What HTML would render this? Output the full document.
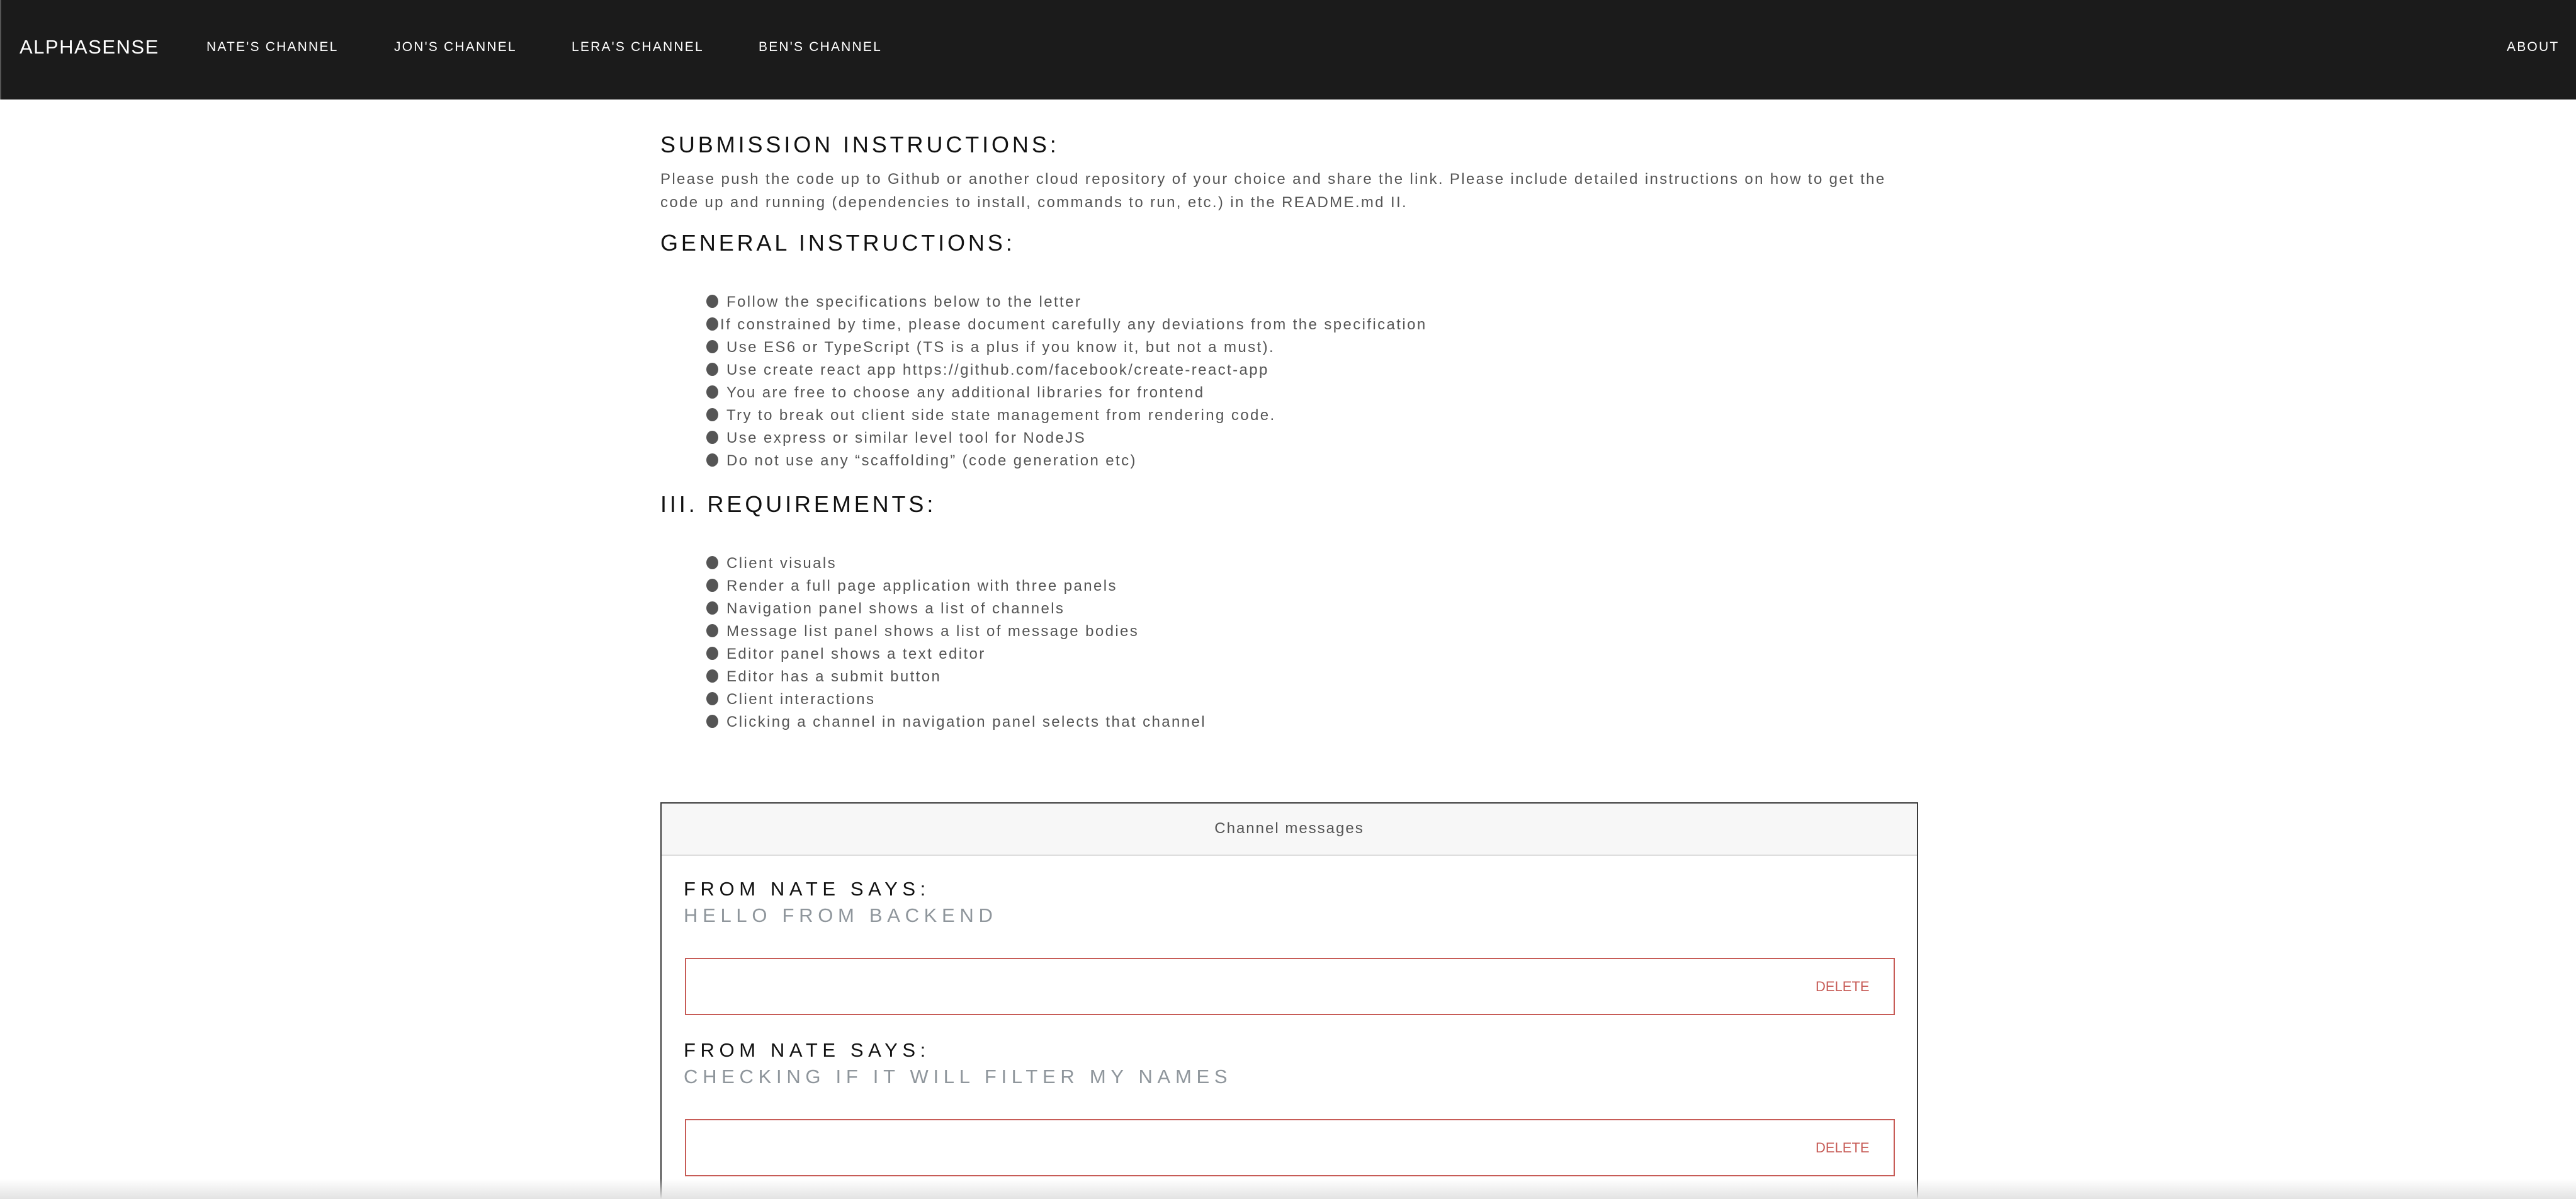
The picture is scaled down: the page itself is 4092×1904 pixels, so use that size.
<!DOCTYPE html>
<html style="overflow:hidden;height:1904px"><head><meta charset="utf-8"><style>
*{margin:0;padding:0;box-sizing:border-box}
body{width:4092px;height:1904px;overflow:hidden;background:#fff;font-family:"Liberation Sans",sans-serif;position:relative}
.hdr{position:absolute;left:0;top:0;width:4092px;height:158px;background:#1b1b1b;border-left:2px solid #555}
.hdr span{position:absolute;color:#fff;top:0;line-height:150px;white-space:nowrap}
.logo{font-size:31px;letter-spacing:1.5px;left:29px}
.nav{font-size:21px;letter-spacing:2.2px}
.a{position:absolute;white-space:nowrap}
h2{position:absolute;left:1049px;font-weight:normal;font-size:36px;letter-spacing:4.9px;color:#111;white-space:nowrap;line-height:40px}
.p{left:1049px;font-size:24px;letter-spacing:2.35px;color:#555;line-height:37px}
.li{position:absolute;left:1122px;font-size:24px;letter-spacing:2.4px;color:#555;white-space:nowrap;line-height:36px}
.li::before{content:"";display:inline-block;width:19px;height:21px;border-radius:50%;background:#555;margin-right:13px;vertical-align:-2px}
.li.t::before{margin-right:3px}
.box{position:absolute;left:1049px;top:1274px;width:1998px;height:640px;border:2px solid #3a3a3a}
.bh{height:83px;background:#f7f7f7;border-bottom:2px solid #ddd;text-align:center;line-height:80px;font-size:24px;letter-spacing:2px;color:#555}
.from{position:absolute;left:1086px;font-size:31px;letter-spacing:7.6px;color:#111;line-height:36px}
.msg{position:absolute;left:1086px;font-size:31px;letter-spacing:7.7px;color:#8f969c;line-height:36px}
.red{position:absolute;left:1088px;width:1922px;height:91px;border:2px solid #c75c57;background:#fff}
.red span{position:absolute;left:1794px;top:0;line-height:87px;font-size:22px;color:#c75c57;letter-spacing:0}
.shade{position:absolute;left:0;top:1872px;width:4092px;height:32px;background:linear-gradient(#fff0,#e3e3e3)}
</style></head><body>
<div class="hdr">
<span class="logo">ALPHASENSE</span>
<span class="nav" style="left:326px">NATE'S CHANNEL</span>
<span class="nav" style="left:624px">JON'S CHANNEL</span>
<span class="nav" style="left:906px">LERA'S CHANNEL</span>
<span class="nav" style="left:1203px">BEN'S CHANNEL</span>
<span class="nav" style="left:3980px">ABOUT</span>
</div>
<h2 style="top:210px">SUBMISSION INSTRUCTIONS:</h2>
<div class="a p" style="top:266px">Please push the code up to Github or another cloud repository of your choice and share the link. Please include detailed instructions on how to get the<br>code up and running (dependencies to install, commands to run, etc.) in the README.md II.</div>
<h2 style="top:366px">GENERAL INSTRUCTIONS:</h2>
<div class="li" style="top:462px">Follow the specifications below to the letter</div>
<div class="li t" style="top:498px">If constrained by time, please document carefully any deviations from the specification</div>
<div class="li" style="top:534px">Use ES6 or TypeScript (TS is a plus if you know it, but not a must).</div>
<div class="li" style="top:570px">Use create react app https://github.com/facebook/create-react-app</div>
<div class="li" style="top:606px">You are free to choose any additional libraries for frontend</div>
<div class="li" style="top:642px">Try to break out client side state management from rendering code.</div>
<div class="li" style="top:678px">Use express or similar level tool for NodeJS</div>
<div class="li" style="top:714px">Do not use any “scaffolding” (code generation etc)</div>
<h2 style="top:781px">III. REQUIREMENTS:</h2>
<div class="li" style="top:877px">Client visuals</div>
<div class="li" style="top:913px">Render a full page application with three panels</div>
<div class="li" style="top:949px">Navigation panel shows a list of channels</div>
<div class="li" style="top:985px">Message list panel shows a list of message bodies</div>
<div class="li" style="top:1021px">Editor panel shows a text editor</div>
<div class="li" style="top:1057px">Editor has a submit button</div>
<div class="li" style="top:1093px">Client interactions</div>
<div class="li" style="top:1129px">Clicking a channel in navigation panel selects that channel</div>
<div class="box"><div class="bh">Channel messages</div></div>
<div class="a from" style="top:1394px">FROM NATE SAYS:</div>
<div class="a msg" style="top:1436px">HELLO FROM BACKEND</div>
<div class="red" style="top:1521px"><span>DELETE</span></div>
<div class="a from" style="top:1650px">FROM NATE SAYS:</div>
<div class="a msg" style="top:1692px">CHECKING IF IT WILL FILTER MY NAMES</div>
<div class="red" style="top:1777px"><span>DELETE</span></div>
<div class="shade"></div>
</body></html>
